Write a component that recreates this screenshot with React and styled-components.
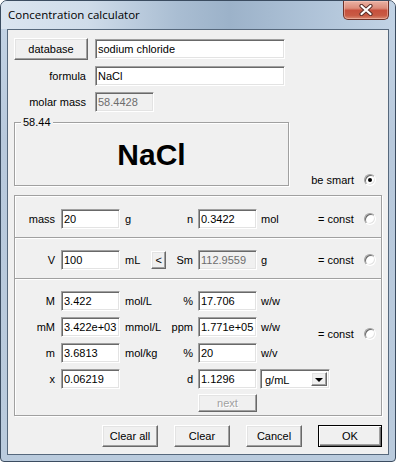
import styled, { createGlobalStyle, css } from "styled-components";

const GlobalStyle = createGlobalStyle`
  html, body { margin: 0; padding: 0; background: #fff; }
  body {
    font-family: "Liberation Sans", Arial, sans-serif;
    font-size: 11px;
    color: #000;
  }
  * { box-sizing: border-box; }
`;

const sunken = css`
  border: 1px solid;
  border-color: #a0a0a0 #fff #fff #a0a0a0;
  box-shadow: inset 1px 1px 0 #696969, inset -1px -1px 0 #e3e3e3;
`;

const raised = css`
  border: 1px solid;
  border-color: #fff #696969 #696969 #fff;
  box-shadow: inset -1px -1px 0 #a0a0a0, inset 1px 1px 0 #e3e3e3;
`;

const etched = css`
  border: 1px solid #a0a0a0;
  box-shadow: inset 1px 1px 0 #fff, 1px 1px 0 #fff;
`;

const concRows = [
  { label: "M", value: "3.422", unit: "mol/L", mid: "%", value2: "17.706", unit2: "w/w" },
  { label: "mM", value: "3.422e+03", unit: "mmol/L", mid: "ppm", value2: "1.771e+05", unit2: "w/w" },
  { label: "m", value: "3.6813", unit: "mol/kg", mid: "%", value2: "20", unit2: "w/v" },
  { label: "x", value: "0.06219", unit: "", mid: "d", value2: "1.1296", combo: "g/mL" },
];

export default function App() {
  return (
    <>
      <GlobalStyle />
      <Window>
        <TitleBar>
          <Title>Concentration calculator</Title>
          <CloseButton>
            <svg width="14" height="12" viewBox="0 0 14 12">
              <path d="M2.5 2 L11.5 10 M11.5 2 L2.5 10" stroke="#5a2f2a" strokeWidth="4.2" strokeLinecap="round" fill="none" />
              <path d="M2.5 2 L11.5 10 M11.5 2 L2.5 10" stroke="#fff" strokeWidth="2.2" strokeLinecap="round" fill="none" />
            </svg>
          </CloseButton>
        </TitleBar>
        <Client>
          <TopForm>
            <PushButton>database</PushButton>
            <TextBox $w="190px">sodium chloride</TextBox>
            <FieldLabel>formula</FieldLabel>
            <TextBox $w="190px">NaCl</TextBox>
            <FieldLabel>molar mass</FieldLabel>
            <TextBox $w="59px" $disabled>58.4428</TextBox>
          </TopForm>

          <SmartRow>
            <GroupBox>
              <Legend>58.44</Legend>
              <Formula>NaCl</Formula>
            </GroupBox>
            <OptionCell>
              be smart
              <Radio $checked />
            </OptionCell>
          </SmartRow>

          <Panel>
            <Section $pad="13px 0 8px">
              <Label>mass</Label>
              <TextBox>20</TextBox>
              <MidCell>
                <span>g</span>
                <MidLabel>n</MidLabel>
              </MidCell>
              <TextBox>0.3422</TextBox>
              <Unit>mol</Unit>
              <ConstCell>
                = const
                <Radio />
              </ConstCell>
            </Section>

            <Section $divider $pad="12px 0 8px">
              <Label>V</Label>
              <TextBox>100</TextBox>
              <MidCell>
                <span>mL</span>
                <SmallButton>&lt;</SmallButton>
                <MidLabel>Sm</MidLabel>
              </MidCell>
              <TextBox $disabled>112.9559</TextBox>
              <Unit>g</Unit>
              <ConstCell>
                = const
                <Radio />
              </ConstCell>
            </Section>

            <Section $divider $pad="12px 0 2px" $rows="repeat(4, 20px) 18px">
              <ConstCell $span>
                = const
                <Radio />
              </ConstCell>
              {concRows.map((r) => [
                <Label key={r.label + "l"}>{r.label}</Label>,
                <TextBox key={r.label + "v"}>{r.value}</TextBox>,
                <MidCell key={r.label + "m"}>
                  <span>{r.unit}</span>
                  <MidLabel>{r.mid}</MidLabel>
                </MidCell>,
                <TextBox key={r.label + "v2"}>{r.value2}</TextBox>,
                r.combo ? (
                  <Combo key={r.label + "c"}>
                    <ComboText>{r.combo}</ComboText>
                    <DropButton>
                      <Arrow />
                    </DropButton>
                  </Combo>
                ) : (
                  <Unit key={r.label + "u"}>{r.unit2}</Unit>
                ),
              ])}
              <NextButton>next</NextButton>
            </Section>
          </Panel>

          <Footer>
            <PushButton $w="56px">Clear all</PushButton>
            <PushButton $w="56px">Clear</PushButton>
            <PushButton $w="56px">Cancel</PushButton>
            <PushButton $w="64px" $default>OK</PushButton>
          </Footer>
        </Client>
      </Window>
    </>
  );
}

const Window = styled.div`
  width: 396px;
  height: 462px;
  border: 1px solid #3b4c60;
  border-radius: 7px 7px 4px 4px;
  padding-bottom: 6px;
  background: linear-gradient(180deg, #c5d5e6 0%, #b8c9dc 30%, #bacbdd 100%);
  overflow: hidden;
`;

const TitleBar = styled.div`
  height: 28px;
  padding: 0 6px 0 7px;
  display: flex;
  justify-content: space-between;
  align-items: flex-start;
  background: linear-gradient(
    90deg,
    #dbe5f0 0%,
    #cfdcea 22%,
    #a9bdd2 45%,
    #9cb2c9 58%,
    #aec2d7 78%,
    #c2d3e5 100%
  );
`;

const Title = styled.div`
  font-family: "Open Sans", "Noto Sans", sans-serif;
  font-size: 11.5px;
  line-height: 28px;
  color: #000;
`;

const CloseButton = styled.div`
  width: 46px;
  height: 19px;
  display: flex;
  align-items: center;
  justify-content: center;
  border: 1px solid #6e3128;
  border-top: none;
  border-radius: 0 0 5px 5px;
  background: linear-gradient(
    180deg,
    #eab2a4 0%,
    #dc8c7a 40%,
    #c7503d 52%,
    #c85a44 80%,
    #d98a72 100%
  );
  box-shadow: inset 0 0 0 1px rgba(255, 210, 200, 0.45);
`;

const Client = styled.div`
  margin: 0 6px;
  height: 426px;
  border: 1px solid #56687c;
  background: #f0f0f0;
  padding: 8px 6px 0;
`;

const TopForm = styled.div`
  display: grid;
  grid-template-columns: 74px 190px;
  grid-template-rows: 22px 20px 20px;
  column-gap: 7px;
  row-gap: 6px;
  align-items: center;
`;

const FieldLabel = styled.div`
  text-align: right;
  padding-right: 2px;
  white-space: nowrap;
`;

const TextBox = styled.div`
  ${sunken};
  width: ${(p) => p.$w || "59px"};
  height: 20px;
  padding: 0 2px;
  line-height: 18px;
  white-space: nowrap;
  overflow: hidden;
  background: ${(p) => (p.$disabled ? "#f0f0f0" : "#fff")};
  color: ${(p) => (p.$disabled ? "#6d6d6d" : "#000")};
`;

const PushButton = styled.div`
  ${raised};
  width: ${(p) => p.$w || "74px"};
  height: 22px;
  display: flex;
  align-items: center;
  justify-content: center;
  background: #f0f0f0;
  ${(p) =>
    p.$default &&
    css`
      border: 1px solid #000;
      box-shadow: inset 1px 1px 0 #fff, inset -1px -1px 0 #696969,
        inset -2px -2px 0 #a0a0a0;
    `}
`;

const SmartRow = styled.div`
  display: flex;
  align-items: flex-end;
  margin-top: 10px;
`;

const GroupBox = styled.div`
  ${etched};
  position: relative;
  width: 275px;
  height: 64px;
  display: flex;
  align-items: center;
  justify-content: center;
`;

const Legend = styled.span`
  position: absolute;
  top: -7px;
  left: 6px;
  padding: 0 2px;
  line-height: 13px;
  background: #f0f0f0;
`;

const Formula = styled.div`
  font-size: 30px;
  font-weight: bold;
  line-height: 1;
  margin-top: 1px;
`;

const OptionCell = styled.div`
  margin-left: auto;
  padding-right: 6px;
  display: flex;
  align-items: center;
  gap: 10px;
  line-height: 12px;
`;

const Radio = styled.span`
  ${sunken};
  position: relative;
  display: inline-block;
  width: 12px;
  height: 12px;
  border-radius: 50%;
  background: #fff;
  &::after {
    content: "";
    display: ${(p) => (p.$checked ? "block" : "none")};
    position: absolute;
    left: 3px;
    top: 3px;
    width: 4px;
    height: 4px;
    border-radius: 50%;
    background: #000;
  }
`;

const Panel = styled.div`
  ${etched};
  margin-top: 9px;
`;

const Section = styled.div`
  display: grid;
  grid-template-columns: 46px 59px 78px 58px 62px 1fr;
  grid-template-rows: ${(p) => p.$rows || "20px"};
  row-gap: 6px;
  align-items: center;
  padding: ${(p) => p.$pad};
  ${(p) =>
    p.$divider &&
    css`
      border-top: 1px solid #a0a0a0;
      box-shadow: inset 0 1px 0 #fff;
    `}
`;

const Label = styled.div`
  text-align: right;
  padding-right: 6px;
`;

const MidCell = styled.div`
  display: flex;
  align-items: center;
  padding: 0 5px;
  white-space: nowrap;
`;

const MidLabel = styled.span`
  margin-left: auto;
`;

const SmallButton = styled.div`
  ${raised};
  width: 15px;
  height: 18px;
  margin-left: 11px;
  display: flex;
  align-items: center;
  justify-content: center;
  background: #f0f0f0;
`;

const Unit = styled.div`
  padding-left: 5px;
`;

const ConstCell = styled.div`
  grid-column: 6;
  display: flex;
  align-items: center;
  justify-content: flex-end;
  gap: 10px;
  padding-right: 6px;
  white-space: nowrap;
  ${(p) =>
    p.$span &&
    css`
      grid-row: 1 / 4;
      margin-top: 13px;
    `}
`;

const Combo = styled.div`
  ${sunken};
  margin-left: 4px;
  width: 70px;
  height: 20px;
  background: #fff;
  display: flex;
  align-items: stretch;
  padding: 2px;
`;

const ComboText = styled.div`
  flex: 1;
  padding-left: 2px;
  line-height: 16px;
`;

const DropButton = styled.div`
  ${raised};
  width: 16px;
  display: flex;
  align-items: center;
  justify-content: center;
  background: #f0f0f0;
`;

const Arrow = styled.span`
  width: 0;
  height: 0;
  border-left: 4px solid transparent;
  border-right: 4px solid transparent;
  border-top: 4px solid #000;
  margin-top: 1px;
`;

const NextButton = styled.div`
  ${raised};
  grid-row: 5;
  grid-column: 4;
  height: 18px;
  width: 59px;
  margin-top: -3px;
  display: flex;
  align-items: center;
  justify-content: center;
  background: #f0f0f0;
  color: #a0a0a0;
  text-shadow: 1px 1px 0 #fff;
`;

const Footer = styled.div`
  display: flex;
  justify-content: flex-end;
  gap: 16px;
  margin-top: 9px;
`;
